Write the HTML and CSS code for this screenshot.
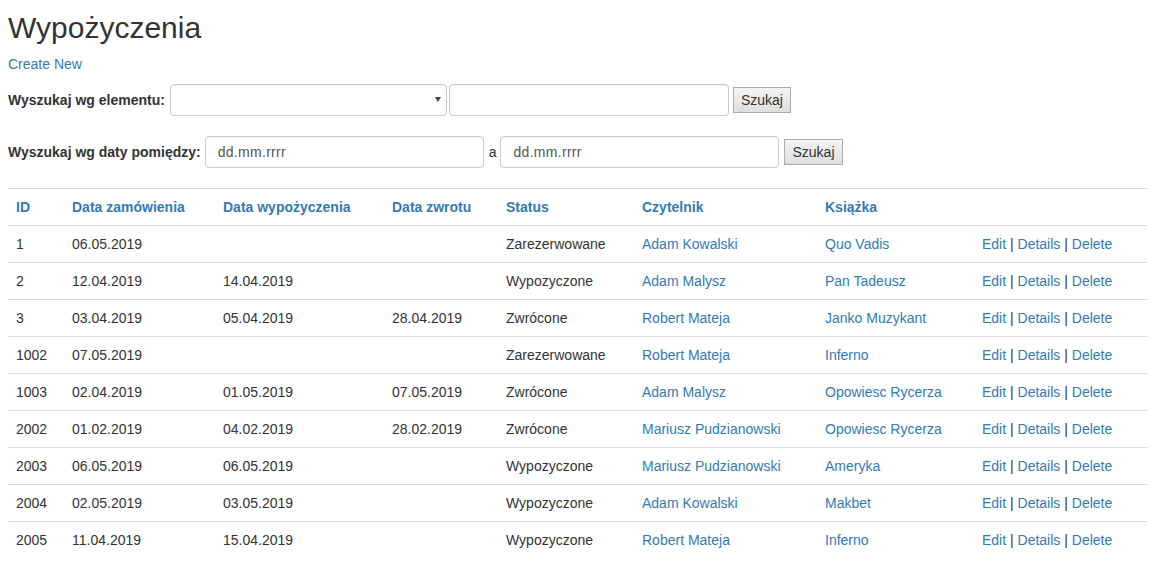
FILE: index.html
```html
<!DOCTYPE html>
<html lang="pl">
<head>
<meta charset="utf-8">
<title>Wypożyczenia</title>
<link rel="stylesheet" href="styles.css">
</head>
<body>
<div class="page">
  <h2 class="title">Wypożyczenia</h2>
  <p class="create"><a href="#">Create New</a></p>

  <form class="search-row row-first">
    <label class="search-label">Wyszukaj wg elementu:</label>
    <span class="select-wrap">
      <select class="form-control select-control"><option></option></select>
      <span class="select-arrow"></span>
    </span>
    <input class="form-control text-control" type="text">
    <button class="btn-plain" type="button">Szukaj</button>
  </form>

  <form class="search-row row-second">
    <label class="search-label">Wyszukaj wg daty pomiędzy:</label>
    <input class="form-control date-control" type="text" placeholder="dd.mm.rrrr">
    <span class="between">a</span>
    <input class="form-control date-control" type="text" placeholder="dd.mm.rrrr">
    <button class="btn-plain btn-second" type="button">Szukaj</button>
  </form>

  <table class="table">
    <colgroup>
      <col class="c-id"><col class="c-zam"><col class="c-wyp"><col class="c-zwr">
      <col class="c-status"><col class="c-czyt"><col class="c-ksiazka"><col class="c-act">
    </colgroup>
    <tbody>
      <tr>
        <th><a href="#">ID</a></th>
        <th><a href="#">Data zamówienia</a></th>
        <th><a href="#">Data wypożyczenia</a></th>
        <th><a href="#">Data zwrotu</a></th>
        <th><a href="#">Status</a></th>
        <th><a href="#">Czytelnik</a></th>
        <th><a href="#">Książka</a></th>
        <th></th>
      </tr>
      <tr>
        <td>1</td><td>06.05.2019</td><td></td><td></td><td>Zarezerwowane</td>
        <td><a href="#">Adam Kowalski</a></td><td><a href="#">Quo Vadis</a></td>
        <td><a href="#">Edit</a> | <a href="#">Details</a> | <a href="#">Delete</a></td>
      </tr>
      <tr>
        <td>2</td><td>12.04.2019</td><td>14.04.2019</td><td></td><td>Wypozyczone</td>
        <td><a href="#">Adam Malysz</a></td><td><a href="#">Pan Tadeusz</a></td>
        <td><a href="#">Edit</a> | <a href="#">Details</a> | <a href="#">Delete</a></td>
      </tr>
      <tr>
        <td>3</td><td>03.04.2019</td><td>05.04.2019</td><td>28.04.2019</td><td>Zwrócone</td>
        <td><a href="#">Robert Mateja</a></td><td><a href="#">Janko Muzykant</a></td>
        <td><a href="#">Edit</a> | <a href="#">Details</a> | <a href="#">Delete</a></td>
      </tr>
      <tr>
        <td>1002</td><td>07.05.2019</td><td></td><td></td><td>Zarezerwowane</td>
        <td><a href="#">Robert Mateja</a></td><td><a href="#">Inferno</a></td>
        <td><a href="#">Edit</a> | <a href="#">Details</a> | <a href="#">Delete</a></td>
      </tr>
      <tr>
        <td>1003</td><td>02.04.2019</td><td>01.05.2019</td><td>07.05.2019</td><td>Zwrócone</td>
        <td><a href="#">Adam Malysz</a></td><td><a href="#">Opowiesc Rycerza</a></td>
        <td><a href="#">Edit</a> | <a href="#">Details</a> | <a href="#">Delete</a></td>
      </tr>
      <tr>
        <td>2002</td><td>01.02.2019</td><td>04.02.2019</td><td>28.02.2019</td><td>Zwrócone</td>
        <td><a href="#">Mariusz Pudzianowski</a></td><td><a href="#">Opowiesc Rycerza</a></td>
        <td><a href="#">Edit</a> | <a href="#">Details</a> | <a href="#">Delete</a></td>
      </tr>
      <tr>
        <td>2003</td><td>06.05.2019</td><td>06.05.2019</td><td></td><td>Wypozyczone</td>
        <td><a href="#">Mariusz Pudzianowski</a></td><td><a href="#">Ameryka</a></td>
        <td><a href="#">Edit</a> | <a href="#">Details</a> | <a href="#">Delete</a></td>
      </tr>
      <tr>
        <td>2004</td><td>02.05.2019</td><td>03.05.2019</td><td></td><td>Wypozyczone</td>
        <td><a href="#">Adam Kowalski</a></td><td><a href="#">Makbet</a></td>
        <td><a href="#">Edit</a> | <a href="#">Details</a> | <a href="#">Delete</a></td>
      </tr>
      <tr>
        <td>2005</td><td>11.04.2019</td><td>15.04.2019</td><td></td><td>Wypozyczone</td>
        <td><a href="#">Robert Mateja</a></td><td><a href="#">Inferno</a></td>
        <td><a href="#">Edit</a> | <a href="#">Details</a> | <a href="#">Delete</a></td>
      </tr>
    </tbody>
  </table>
</div>
</body>
</html>
```

FILE: styles.css
```css
html, body {
  margin: 0;
  padding: 0;
  background: #fff;
}

body {
  font-family: "Liberation Sans", Arial, Helvetica, sans-serif;
  font-size: 14px;
  line-height: 20px;
  color: #333;
}

a {
  color: #337ab7;
  text-decoration: none;
}

.page {
  padding: 0 18px 0 8px;
}

.title {
  font-size: 30px;
  font-weight: normal;
  line-height: 33px;
  margin: 11px 0 10px;
  color: #333;
}

.create {
  margin: 0 0 10px;
}

.search-row {
  display: flex;
  align-items: center;
  margin: 0;
  height: 32px;
}

.row-second {
  margin-top: 20px;
}

.search-label {
  font-weight: bold;
  margin-right: 4px;
  white-space: nowrap;
}

.row-first .search-label {
  margin-right: 5px;
}

.form-control {
  box-sizing: border-box;
  height: 32px;
  padding: 6px 12px;
  font-family: inherit;
  font-size: 14px;
  line-height: 20px;
  color: #555;
  background: #fff;
  border: 1px solid #ccc;
  border-radius: 4px;
  box-shadow: inset 0 1px 1px rgba(0, 0, 0, 0.075);
  outline: none;
  margin: 0;
}

.form-control::placeholder {
  color: #555;
  opacity: 1;
  letter-spacing: 0.3px;
}

.select-wrap {
  position: relative;
  display: block;
  width: 277px;
  height: 32px;
  margin-right: 2px;
}

.select-control {
  width: 100%;
  -webkit-appearance: none;
  appearance: none;
}

.select-arrow {
  position: absolute;
  right: 6px;
  top: 13px;
  width: 0;
  height: 0;
  border-left: 3.5px solid transparent;
  border-right: 3.5px solid transparent;
  border-top: 5px solid #444;
}

.text-control {
  width: 280px;
  margin-right: 4px;
}

.date-control {
  width: 279px;
}

.between {
  margin: 0 4px 0 5px;
}

.btn-plain {
  box-sizing: border-box;
  height: 26px;
  padding: 0 7px;
  font-family: inherit;
  font-size: 14px;
  color: #333;
  border: 1px solid #adadad;
  border-radius: 0;
  background: linear-gradient(#f4f4f4, #dedede);
  margin: 0;
}

.btn-second {
  margin-left: 5px;
}

.table {
  margin-top: 20px;
  width: 1140px;
  border-collapse: collapse;
  border-spacing: 0;
  table-layout: fixed;
}

.table th,
.table td {
  padding: 8px;
  line-height: 20px;
  text-align: left;
  vertical-align: top;
  border-top: 1px solid #ddd;
  white-space: nowrap;
}

.table th {
  font-weight: bold;
}

.c-id { width: 56px; }
.c-zam { width: 151px; }
.c-wyp { width: 169px; }
.c-zwr { width: 114px; }
.c-status { width: 136px; }
.c-czyt { width: 183px; }
.c-ksiazka { width: 157px; }
.c-act { width: 174px; }
```
